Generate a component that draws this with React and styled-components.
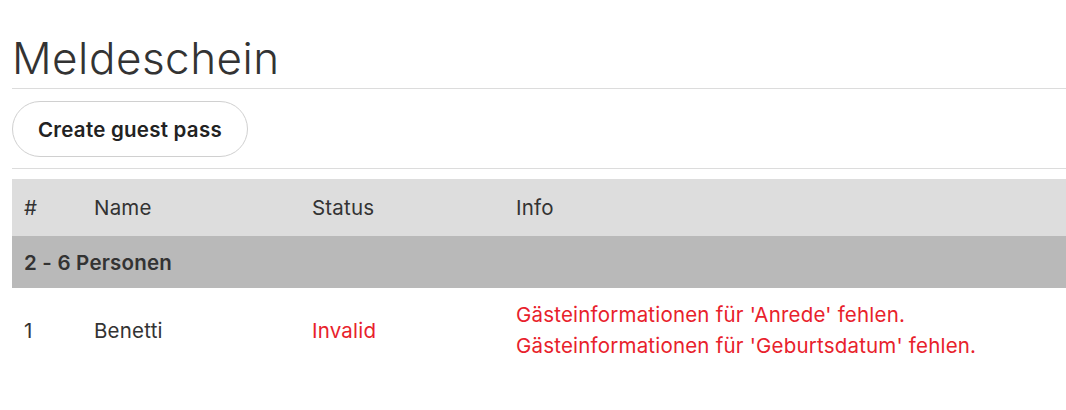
import React from "react";
import styled, { createGlobalStyle } from "styled-components";

const Global = createGlobalStyle`
  html, body { margin: 0; padding: 0; background: #fff; }
  body { font-family: Inter, "Noto Sans", sans-serif; color: #333; }
`;

const Page = styled.div`
  padding: 28px 0 0 12px;
`;

const Title = styled.h1`
  margin: 0;
  font-size: 44px;
  font-weight: 300;
  line-height: 60px;
  color: #333;
  letter-spacing: 0.5px;
`;

const Divider = styled.hr`
  margin: 0;
  border: 0;
  border-top: 1px solid #dcdcdc;
`;

const Toolbar = styled.div`
  padding: 12px 0 11px;
  display: flex;
`;

const Button = styled.button`
  height: 56px;
  padding: 0 25px;
  border: 1px solid #d0d0d0;
  border-radius: 28px;
  background: #fff;
  font-family: Inter, sans-serif;
  font-size: 20.5px;
  font-weight: 600;
  letter-spacing: 0.25px;
  color: #222;
`;

const Table = styled.table`
  margin-top: 10px;
  width: 100%;
  border-collapse: collapse;
  font-size: 20.5px;
  letter-spacing: 0.2px;
`;

const HeadRow = styled.tr`
  background: #dddddd;
  height: 57px;
`;

const GroupRow = styled.tr`
  background: #b9b9b9;
  height: 52px;
`;

const Th = styled.th`
  text-align: left;
  font-weight: 400;
  padding: 0 12px;
  width: ${(p) => p.$w || "auto"};
`;

const GroupCell = styled.td`
  padding: 0 12px;
  font-weight: 600;
`;

const Td = styled.td`
  padding: 11px 12px 10px;
  vertical-align: middle;
  line-height: 31px;
  color: ${(p) => (p.$error ? "#e8212b" : "#333")};
`;

const Msg = styled.div``;

export default function App() {
  return (
    <>
      <Global />
      <Page>
        <Title>Meldeschein</Title>
        <Divider />
        <Toolbar>
          <Button>Create guest pass</Button>
        </Toolbar>
        <Divider />
        <Table>
          <thead>
            <HeadRow>
              <Th $w="46px">#</Th>
              <Th $w="194px">Name</Th>
              <Th $w="180px">Status</Th>
              <Th>Info</Th>
            </HeadRow>
          </thead>
          <tbody>
            <GroupRow>
              <GroupCell colSpan={4}>2 - 6 Personen</GroupCell>
            </GroupRow>
            <tr>
              <Td>1</Td>
              <Td>Benetti</Td>
              <Td $error>Invalid</Td>
              <Td $error>
                <Msg>Gästeinformationen für 'Anrede' fehlen.</Msg>
                <Msg>Gästeinformationen für 'Geburtsdatum' fehlen.</Msg>
              </Td>
            </tr>
          </tbody>
        </Table>
      </Page>
    </>
  );
}
